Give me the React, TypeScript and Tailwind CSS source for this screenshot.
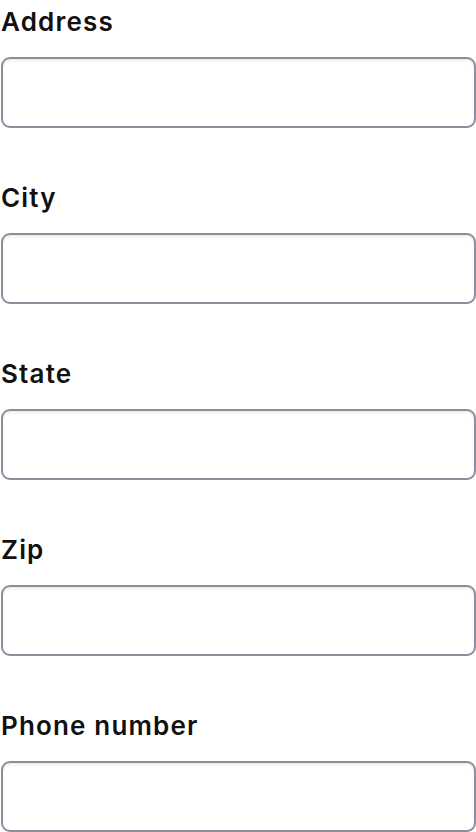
const fields = ["Address", "City", "State", "Zip", "Phone number"];

const Field = ({ label }: { label: string }) => {
  return (
    <div className="mb-[48px] flex flex-col">
      <label className="h-[41px] pt-[1px] flex items-center text-[26px] font-semibold text-[#111111] tracking-[0.045em]">
        {label}
      </label>
      <input
        type="text"
        className="mt-[16px] h-[71px] w-full rounded-[9px] border-2 border-[#8d8e9b] bg-white shadow-[inset_0_2px_3px_rgba(0,0,0,0.07)] outline-none"
      />
    </div>
  );
};

export default function App() {
  return (
    <div className="w-[476px] h-[832px] overflow-hidden bg-white pl-[1px] font-['Inter',sans-serif]">
      {fields.map((f) => (
        <Field key={f} label={f} />
      ))}
    </div>
  );
}
